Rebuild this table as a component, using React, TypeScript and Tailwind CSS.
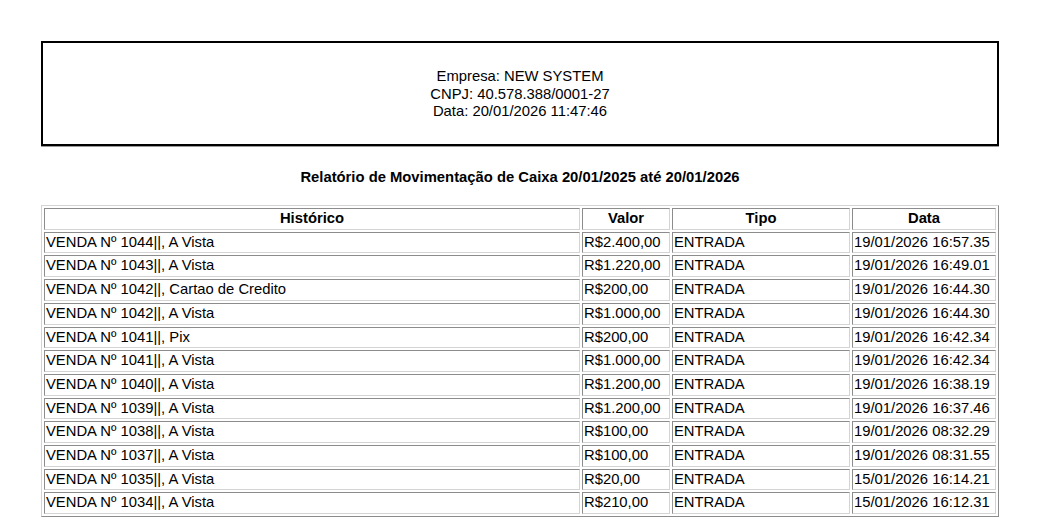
const rows = [
  ["VENDA Nº 1044||, A Vista", "R$2.400,00", "ENTRADA", "19/01/2026 16:57.35"],
  ["VENDA Nº 1043||, A Vista", "R$1.220,00", "ENTRADA", "19/01/2026 16:49.01"],
  ["VENDA Nº 1042||, Cartao de Credito", "R$200,00", "ENTRADA", "19/01/2026 16:44.30"],
  ["VENDA Nº 1042||, A Vista", "R$1.000,00", "ENTRADA", "19/01/2026 16:44.30"],
  ["VENDA Nº 1041||, Pix", "R$200,00", "ENTRADA", "19/01/2026 16:42.34"],
  ["VENDA Nº 1041||, A Vista", "R$1.000,00", "ENTRADA", "19/01/2026 16:42.34"],
  ["VENDA Nº 1040||, A Vista", "R$1.200,00", "ENTRADA", "19/01/2026 16:38.19"],
  ["VENDA Nº 1039||, A Vista", "R$1.200,00", "ENTRADA", "19/01/2026 16:37.46"],
  ["VENDA Nº 1038||, A Vista", "R$100,00", "ENTRADA", "19/01/2026 08:32.29"],
  ["VENDA Nº 1037||, A Vista", "R$100,00", "ENTRADA", "19/01/2026 08:31.55"],
  ["VENDA Nº 1035||, A Vista", "R$20,00", "ENTRADA", "15/01/2026 16:14.21"],
  ["VENDA Nº 1034||, A Vista", "R$210,00", "ENTRADA", "15/01/2026 16:12.31"],
];

const cell =
  "h-[21.7px] border border-t-[#8c8c8c] border-l-[#8c8c8c] border-b-[#d4d4d4] border-r-[#d4d4d4] px-[1px] py-0 leading-[19.7px] whitespace-nowrap";

export default function App() {
  return (
    <div className="min-h-screen bg-white px-[41px] pt-[41px] font-['Liberation_Sans',Arial,sans-serif] text-[14.8px] text-black">
      <div className="flex h-[105px] flex-col items-center justify-center border-2 border-black pt-[2px] leading-[17.5px] shadow-[0_1px_0_#9a9a9a]">
        <div>Empresa: NEW SYSTEM</div>
        <div>CNPJ: 40.578.388/0001-27</div>
        <div>Data: 20/01/2026 11:47:46</div>
      </div>

      <h1 className="mt-[23px] mb-[19px] text-center text-[14.8px] font-bold leading-[17px]">
        Relatório de Movimentação de Caixa 20/01/2025 até 20/01/2026
      </h1>

      <table className="w-[958px] table-fixed border-separate border-spacing-[2px] border border-t-[#d4d4d4] border-l-[#d4d4d4] border-b-[#8c8c8c] border-r-[#8c8c8c]">
        <colgroup>
          <col className="w-[536px]" />
          <col className="w-[88px]" />
          <col className="w-[178px]" />
          <col className="w-[144px]" />
        </colgroup>
        <thead>
          <tr>
            <th className={`${cell} text-center font-bold`}>Histórico</th>
            <th className={`${cell} text-center font-bold`}>Valor</th>
            <th className={`${cell} text-center font-bold`}>Tipo</th>
            <th className={`${cell} text-center font-bold`}>Data</th>
          </tr>
        </thead>
        <tbody>
          {rows.map((r, i) => (
            <tr key={i}>
              {r.map((v, j) => (
                <td key={j} className={`${cell} text-left`}>
                  {v}
                </td>
              ))}
            </tr>
          ))}
        </tbody>
      </table>
    </div>
  );
}
